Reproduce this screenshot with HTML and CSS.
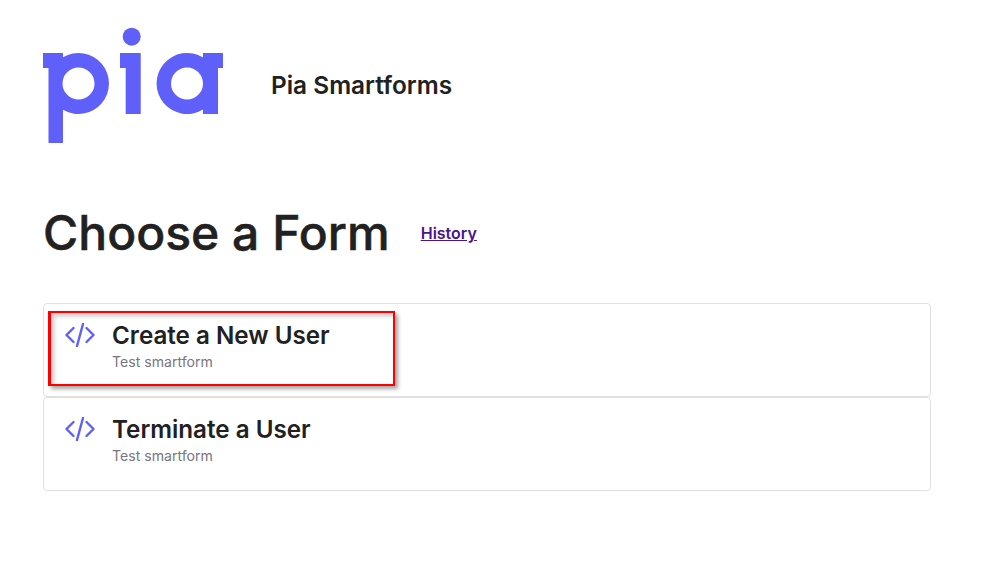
FILE: index.html
```html
<!DOCTYPE html>
<html lang="en">
<head>
<meta charset="utf-8">
<title>Pia Smartforms</title>
<link rel="stylesheet" href="styles.css">
</head>
<body>
<header class="site-header">
  <svg class="logo" viewBox="0 0 181 116" width="181" height="116" aria-label="pia">
    <g fill="#5f5ffa">
      <path fill-rule="evenodd" d="M0 26H20V30.200A30.500 30.500 0 1 1 20 82.800V116H5.500V41H0ZM35.500 40.500A16 16 0 1 0 35.500 72.500A16 16 0 1 0 35.500 40.500Z"/>
      <circle cx="88.700" cy="9.700" r="9"/>
      <path d="M77 26H97.700V87H82.700V41H77Z"/>
      <path fill-rule="evenodd" d="M160 30.500V26H180V41H175V87H160V82.500A30.500 30.500 0 1 1 160 30.500ZM144 40.500A16 16 0 1 0 144 72.500A16 16 0 1 0 144 40.500Z"/>
    </g>
  </svg>
  <div class="brand">Pia Smartforms</div>
</header>
<main class="content">
  <div class="title-row">
    <h1 class="page-title">Choose a Form</h1>
    <a class="history" href="#">History</a>
  </div>
  <div class="form-list">
    <a class="form-card" href="#">
      <svg class="code-icon" viewBox="0 0 30 24" width="30" height="24" aria-hidden="true"><path d="M8.500 5L1.500 12L8.500 19M21.500 5L28.500 12L21.500 19M18 1L12 23"/></svg>
      <div class="form-text">
        <div class="form-name">Create a New User</div>
        <div class="form-desc">Test smartform</div>
      </div>
      <span class="highlight"></span>
    </a>
    <a class="form-card" href="#">
      <svg class="code-icon" viewBox="0 0 30 24" width="30" height="24" aria-hidden="true"><path d="M8.500 5L1.500 12L8.500 19M21.500 5L28.500 12L21.500 19M18 1L12 23"/></svg>
      <div class="form-text">
        <div class="form-name">Terminate a User</div>
        <div class="form-desc">Test smartform</div>
      </div>
    </a>
  </div>
</main>
</body>
</html>
```
FILE: styles.css
```css
* { box-sizing: border-box; }
html, body { margin: 0; padding: 0; background: #fff; }
body { width: 984px; height: 561px; overflow: hidden; font-family: Inter, "Liberation Sans", sans-serif; color: #212121; }
.site-header { display: flex; align-items: flex-start; padding: 27px 0 0 43px; height: 180px; }
.logo { display: block; flex: none; }
.brand { margin: 44px 0 0 47px; font-size: 24.400px; line-height: 28px; font-weight: 600; }
.content { padding: 0 53px 0 43px; }
.title-row { display: flex; align-items: center; height: 106px; }
.page-title { margin: 0; font-size: 48px; line-height: 106px; font-weight: 500; -webkit-text-stroke: 0.500px #212121; letter-spacing: 0.030px; height: 106px; }
.history { margin-left: 31px; font-size: 16px; font-weight: 600; color: #4a148c; text-decoration: underline; }
.form-list { margin-top: 17px; display: flex; flex-direction: column; }
.form-card { position: relative; display: flex; align-items: flex-start; height: 94px; padding: 19px 21px; border: 1px solid #e0e0e0; border-radius: 4px; color: inherit; text-decoration: none; }
.code-icon { flex: none; fill: none; stroke: #5f5ffa; stroke-width: 2.400; stroke-linecap: round; stroke-linejoin: round; }
.form-text { margin-left: 17px; }
.form-name { font-size: 24.200px; line-height: 26px; font-weight: 600; }
.form-desc { margin-top: 3px; font-size: 14.100px; line-height: 20px; color: #7a7580; }
.highlight { position: absolute; left: 4px; top: 7px; width: 347px; height: 75px; border-style: solid; border-color: #f00; border-width: 2px 2px 2px 3px; box-shadow: 3px 3px 4px rgba(0,0,0,.35), inset 3px 3px 4px rgba(0,0,0,.22); pointer-events: none; }
```
